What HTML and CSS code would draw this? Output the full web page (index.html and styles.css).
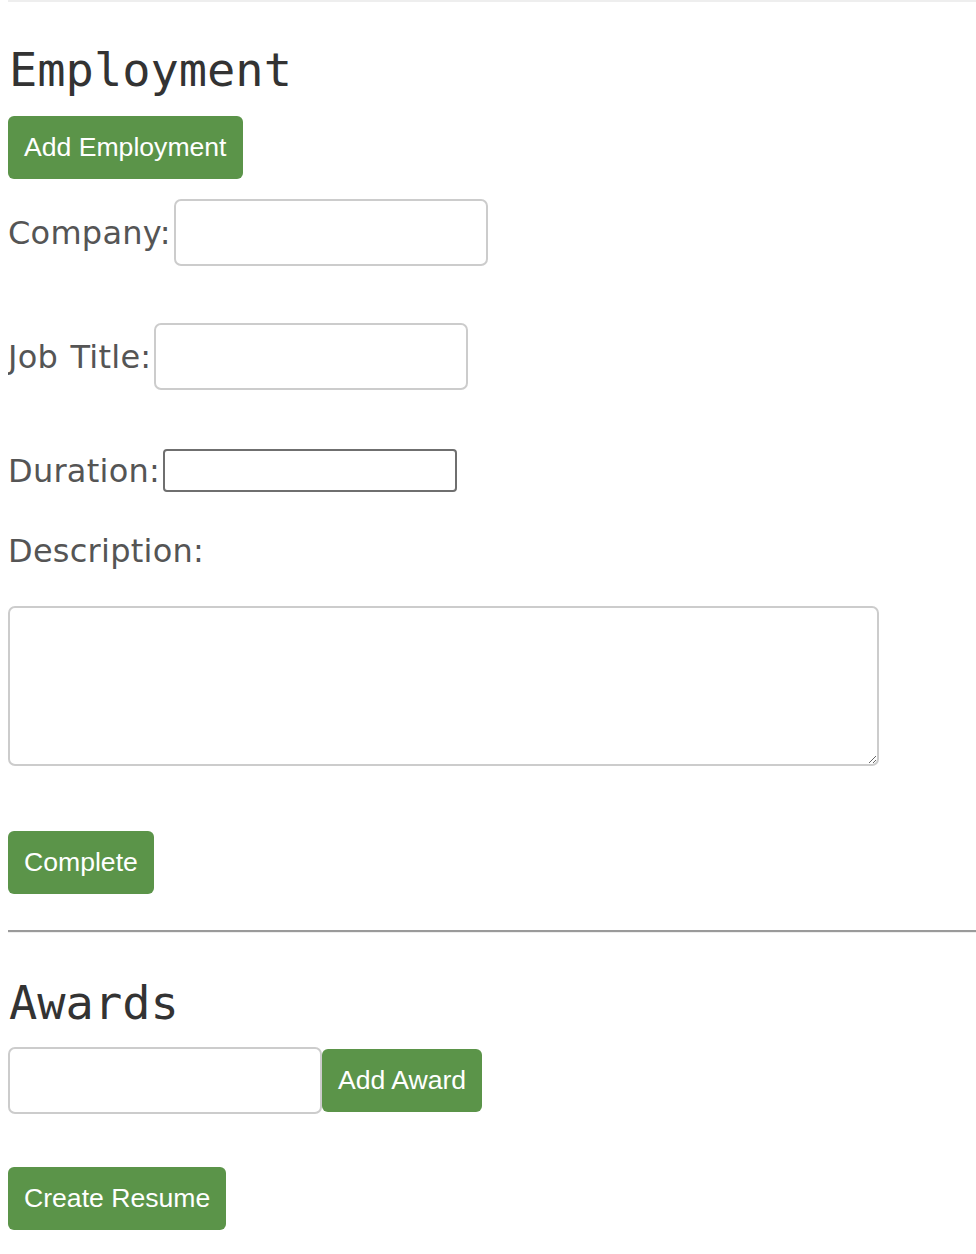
FILE: index.html
```html
<!DOCTYPE html>
<html lang="en">
<head>
<meta charset="utf-8">
<title>Resume Builder</title>
<link rel="stylesheet" href="styles.css">
</head>
<body>
<div class="top-rule"></div>
<section class="employment">
  <h2 class="section-title">Employment</h2>
  <button class="btn btn-add-employment" type="button">Add Employment</button>
  <div class="field field-company">
    <label class="field-label" for="company">Company:</label>
    <input class="text-input" id="company" type="text">
  </div>
  <div class="field field-title">
    <label class="field-label" for="jobtitle">Job Title:</label>
    <input class="text-input" id="jobtitle" type="text">
  </div>
  <div class="field field-duration">
    <label class="field-label" for="duration">Duration:</label>
    <input class="plain-input" id="duration" type="text">
  </div>
  <label class="field-label desc-label" for="description">Description:</label>
  <textarea class="desc-area" id="description"></textarea>
  <button class="btn btn-complete" type="button">Complete</button>
</section>
<hr class="divider">
<section class="awards">
  <h2 class="section-title awards-title">Awards</h2>
  <div class="award-row">
    <input class="text-input award-input" type="text">
    <button class="btn" type="button">Add Award</button>
  </div>
  <button class="btn btn-create" type="button">Create Resume</button>
</section>
</body>
</html>
```
FILE: styles.css
```css
html, body {
  background: #ffffff;
}
body {
  margin: 0 0 0 8px;
  font-family: "DejaVu Sans", Verdana, sans-serif;
  color: #555555;
}
.top-rule {
  height: 2px;
  background: #eeeeee;
}
.section-title {
  margin: 40px 0 0 1px;
  font-family: "DejaVu Sans Mono", Menlo, monospace;
  font-weight: normal;
  font-size: 47px;
  line-height: 56px;
  color: #333333;
}
.btn {
  display: inline-block;
  font-family: "Liberation Sans", Arial, sans-serif;
  font-size: 26.6px;
  line-height: 31px;
  padding: 16px 16px;
  color: #ffffff;
  background: #5b9449;
  border: none;
  border-radius: 6px;
  cursor: pointer;
}
.btn-add-employment {
  margin-top: 18px;
}
.field {
  display: flex;
  align-items: center;
  gap: 3px;
}
.field-company {
  margin-top: 20px;
}
.field-title {
  margin-top: 57px;
}
.field-duration {
  margin-top: 59px;
}
.field-label {
  font-size: 32px;
  line-height: 38px;
  letter-spacing: 0.25px;
  word-spacing: 2px;
  color: #555555;
}
.text-input {
  box-sizing: border-box;
  width: 314px;
  height: 67px;
  border: 2px solid #cccccc;
  border-radius: 7px;
  background: #ffffff;
  padding: 6px 12px;
  font-size: 20px;
}
.plain-input {
  box-sizing: border-box;
  width: 294px;
  height: 43px;
  border: 2px solid #6f6f6f;
  border-radius: 4px;
  background: #ffffff;
  font-size: 20px;
}
.desc-label {
  display: block;
  margin-top: 40px;
}
.desc-area {
  display: block;
  box-sizing: border-box;
  width: 871px;
  height: 160px;
  margin-top: 36px;
  border: 2px solid #cccccc;
  border-radius: 7px;
  background: #ffffff;
}
.btn-complete {
  margin-top: 65px;
}
.divider {
  margin: 36px 0 0 0;
  height: 0;
  border: none;
  border-top: 2px solid #9a9a9a;
  border-bottom: 1px solid #eeeeee;
}
.awards-title {
  margin-top: 42px;
}
.award-row {
  display: flex;
  align-items: center;
  margin-top: 16px;
}
.award-input {
  width: 314px;
  height: 67px;
}
.btn-create {
  display: block;
  margin-top: 53px;
}
```
